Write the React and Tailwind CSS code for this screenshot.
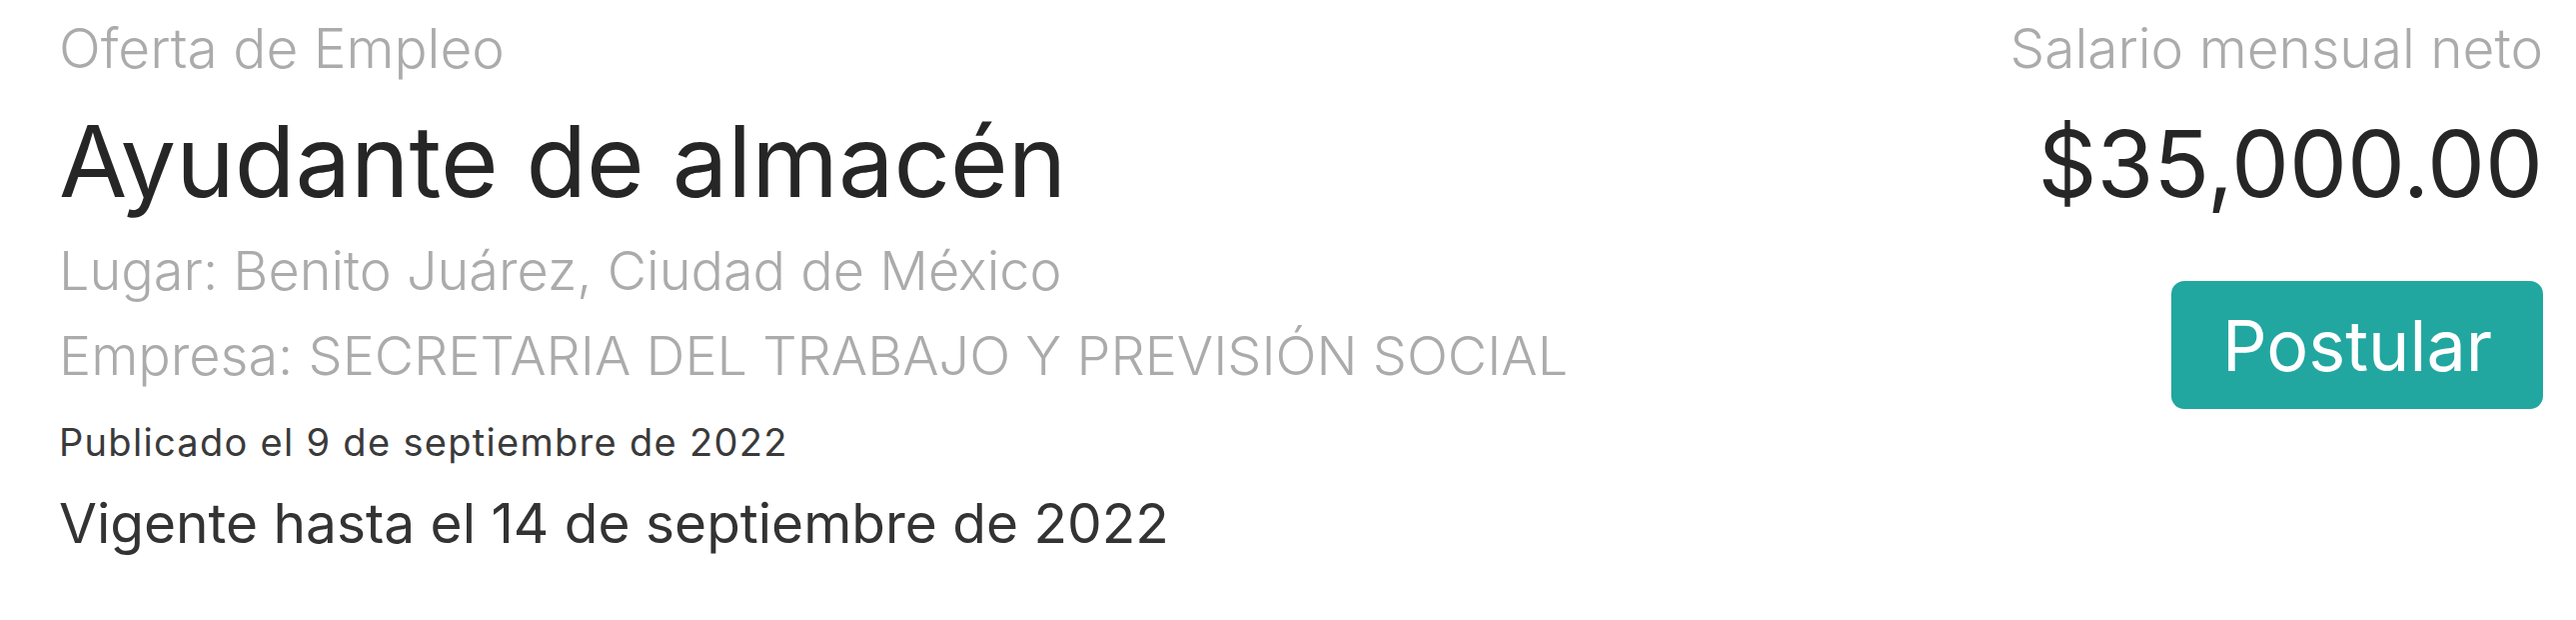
export default function App() {
  return (
    <div className="min-h-[620px] w-full bg-white font-['Inter',sans-serif]">
      <div className="flex justify-between pl-[59px] pr-[33px] pt-[8px]">
        <div className="flex flex-col">
          <p className="text-[55px] font-light leading-[80px] text-[#ababab]">Oferta de Empleo</p>
          <h1 className="mt-[13px] text-[99px] font-normal leading-[120px] text-[#262626]">Ayudante de almacén</h1>
          <p className="mt-[7px] text-[54px] font-light leading-[85px] text-[#ababab]">Lugar: Benito Juárez, Ciudad de México</p>
          <p className="text-[54px] font-light leading-[85px] text-[#ababab]">
            Empresa: SECRETARIA DEL TRABAJO Y PREVISIÓN SOCIAL
          </p>
          <p className="text-[38px] font-normal leading-[89px] tracking-[1.3px] text-[#3a3a3a]">
            Publicado el 9 de septiembre de 2022
          </p>
          <p className="text-[55px] font-normal leading-[73px] text-[#333333]">Vigente hasta el 14 de septiembre de 2022</p>
        </div>
        <div className="flex flex-col items-end">
          <p className="text-[55px] font-light leading-[80px] text-[#ababab]">Salario mensual neto</p>
          <p className="mt-[16px] text-[92px] font-normal leading-[120px] text-[#262626]">$35,000.00</p>
          <button
            type="button"
            className="mt-[57px] flex h-[128px] w-[372px] items-center justify-center rounded-[13px] bg-[#22a6a0] text-[70px] font-normal text-white"
          >
            Postular
          </button>
        </div>
      </div>
    </div>
  )
}
